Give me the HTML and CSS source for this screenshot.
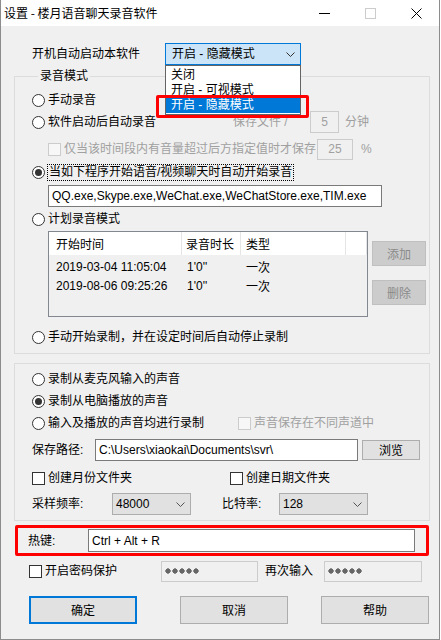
FILE: index.html
```html
<!DOCTYPE html>
<html lang="zh-CN">
<head>
    <meta charset="UTF-8">
    <title>设置 - 楼月语音聊天录音软件</title>
    <link rel="stylesheet" href="styles.css">
</head>
<body>
<div class="window">
    <div class="titlebar">
        <span class="title">设置 - 楼月语音聊天录音软件</span>
        <div class="ctrls">
            <span class="ctrl">
                <svg width="11" height="11" viewBox="0 0 11 11"><line x1="0" y1="5.5" x2="11" y2="5.5" stroke="#000"/></svg>
            </span>
            <span class="ctrl">
                <svg width="11" height="11" viewBox="0 0 11 11"><rect x="0.5" y="0.5" width="10" height="10" fill="none" stroke="#ccc"/></svg>
            </span>
            <span class="ctrl">
                <svg width="11" height="11" viewBox="0 0 11 11"><path d="M0.5 0.5 L10.5 10.5 M10.5 0.5 L0.5 10.5" stroke="#000" fill="none"/></svg>
            </span>
        </div>
    </div>

    <div class="content">
        <div class="row autostart">
            <span class="autostart-label">开机自动启动本软件</span>
            <div class="combo-wrap">
                <div class="combo focus">
                    <span>开启 - 隐藏模式</span>
                    <svg class="chev" width="9" height="5" viewBox="0 0 9 5"><polyline points="0.5,0.5 4.5,4.5 8.5,0.5" fill="none" stroke="#333"/></svg>
                </div>
                <div class="dropdown">
                    <div class="item">关闭</div>
                    <div class="item">开启 - 可视模式</div>
                    <div class="item selected">开启 - 隐藏模式</div>
                </div>
                <div class="mark mark-item"></div>
            </div>
        </div>

        <fieldset class="group group-mode">
            <legend>录音模式</legend>

            <div class="row r1">
                <label class="opt"><span class="radio"></span>手动录音</label>
            </div>
            <div class="row">
                <label class="opt w-auto-rec"><span class="radio"></span>软件启动后自动录音</label>
                <span class="dim w-save">保存文件 /</span>
                <span class="edit disabled small-5">5</span>
                <span class="dim unit">分钟</span>
            </div>
            <div class="row r3 indent">
                <label class="opt dim w-threshold"><span class="check disabled"></span>仅当该时间段内有音量超过后方指定值时才保存</label>
                <span class="edit disabled small-25">25</span>
                <span class="dim pct">%</span>
            </div>
            <div class="row r4">
                <label class="opt"><span class="radio on"></span><span class="focus-rect">当如下程序开始语音/视频聊天时自动开始录音</span></label>
            </div>
            <div class="edit apps">QQ.exe,Skype.exe,WeChat.exe,WeChatStore.exe,TIM.exe</div>
            <div class="row r5">
                <label class="opt"><span class="radio"></span>计划录音模式</label>
            </div>
            <div class="schedule">
                <div class="list">
                    <div class="lrow head">
                        <span class="c1">开始时间</span>
                        <span class="c2">录音时长</span>
                        <span class="c3">类型</span>
                        <span class="c4"></span>
                    </div>
                    <div class="lbody">
                        <div class="lrow">
                            <span class="c1">2019-03-04 11:05:04</span>
                            <span class="c2">1'0''</span>
                            <span class="c3">一次</span>
                        </div>
                        <div class="lrow">
                            <span class="c1">2019-08-06 09:25:26</span>
                            <span class="c2">1'0''</span>
                            <span class="c3">一次</span>
                        </div>
                    </div>
                </div>
                <div class="side">
                    <span class="btn off add">添加</span>
                    <span class="btn off del">删除</span>
                </div>
            </div>
            <div class="row r6">
                <label class="opt"><span class="radio"></span>手动开始录制，并在设定时间后自动停止录制</label>
            </div>
        </fieldset>

        <fieldset class="group group-source">
            <div class="row q1">
                <label class="opt"><span class="radio"></span>录制从麦克风输入的声音</label>
            </div>
            <div class="row">
                <label class="opt"><span class="radio on"></span>录制从电脑播放的声音</label>
            </div>
            <div class="row">
                <label class="opt w-both"><span class="radio"></span>输入及播放的声音均进行录制</label>
                <label class="opt dim"><span class="check disabled"></span>声音保存在不同声道中</label>
            </div>
            <div class="row q4">
                <span class="w-path">保存路径:</span>
                <span class="edit path">C:\Users\xiaokai\Documents\svr\</span>
                <span class="btn browse">浏览</span>
            </div>
            <div class="row q5">
                <label class="opt w-month"><span class="check"></span>创建月份文件夹</label>
                <label class="opt"><span class="check"></span>创建日期文件夹</label>
            </div>
            <div class="row q6">
                <span class="w-rate">采样频率:</span>
                <span class="combo gray rate">
                    <span>48000</span>
                    <svg class="chev" width="9" height="5" viewBox="0 0 9 5"><polyline points="0.5,0.5 4.5,4.5 8.5,0.5" fill="none" stroke="#555"/></svg>
                </span>
                <span class="w-bit">比特率:</span>
                <span class="combo gray bit">
                    <span>128</span>
                    <svg class="chev" width="9" height="5" viewBox="0 0 9 5"><polyline points="0.5,0.5 4.5,4.5 8.5,0.5" fill="none" stroke="#555"/></svg>
                </span>
            </div>
        </fieldset>

        <div class="hotkey">
            <span class="w-hotkey">热键:</span>
            <span class="edit hotkey-edit">Ctrl + Alt + R</span>
        </div>

        <div class="row password">
            <label class="opt w-pass"><span class="check"></span>开启密码保护</label>
            <span class="edit disabled pass"><span class="dots"></span></span>
            <span class="again">再次输入</span>
            <span class="edit disabled pass pass2"><span class="dots"></span></span>
        </div>

        <div class="buttons">
            <span class="btn big default">确定</span>
            <span class="btn big">取消</span>
            <span class="btn big help">帮助</span>
        </div>
    </div>
</div>
</body>
</html>
```

FILE: styles.css
```css
body {
    margin: 0;
    background: #fff;
    font: 12px/16px "Liberation Sans", "Noto Sans CJK SC", sans-serif;
    color: #000;
}
.window {
    width: 440px;
    height: 640px;
    box-sizing: border-box;
    border: 1px solid #8c8c8c;
    border-top: 0;
    background: #f0f0f0;
}
.titlebar {
    height: 26px;
    background: #fff;
    display: flex;
    align-items: center;
    padding-left: 3px;
}
.title {
    font-family: "Noto Sans CJK SC", sans-serif;
}
.ctrls {
    margin-left: auto;
    display: flex;
}
.ctrl {
    width: 46px;
    height: 26px;
    display: flex;
    align-items: center;
    justify-content: center;
}
.ctrl svg {
    display: block;
}

.content {
    padding-top: 17px;
}
.row {
    height: 22px;
    display: flex;
    align-items: center;
}
.opt {
    display: flex;
    align-items: center;
    gap: 3px;
    white-space: nowrap;
}
.dim {
    color: #a0a0a0;
}

/* radio and check */
.radio {
    flex-shrink: 0;
    width: 13px;
    height: 13px;
    box-sizing: border-box;
    border: 1px solid #333;
    border-radius: 50%;
    background: #fff;
    display: flex;
    align-items: center;
    justify-content: center;
}
.radio.on::after {
    content: "";
    width: 7px;
    height: 7px;
    border-radius: 50%;
    background: #333;
}
.check {
    flex-shrink: 0;
    width: 13px;
    height: 13px;
    box-sizing: border-box;
    border: 1px solid #333;
    background: #fff;
}
.check.disabled {
    border-color: #cccccc;
    background: #f7f7f7;
}

/* edit boxes */
.edit {
    flex-shrink: 0;
    height: 22px;
    box-sizing: border-box;
    border: 1px solid #7a7a7a;
    background: #fff;
    padding: 0 3px;
    display: flex;
    align-items: center;
    white-space: nowrap;
}
.edit.disabled {
    border-color: #cccccc;
    background: #f0f0f0;
    color: #a0a0a0;
    justify-content: center;
}

/* buttons */
.btn {
    flex-shrink: 0;
    box-sizing: border-box;
    display: flex;
    align-items: center;
    justify-content: center;
    background: #e1e1e1;
    border: 1px solid #adadad;
    font-family: "Noto Sans CJK SC", sans-serif;
}
.btn.off {
    background: #cccccc;
    border-color: #bfbfbf;
    color: #8a8a8a;
}

/* autostart combo */
.autostart-label {
    width: 133px;
    padding-left: 31px;
}
.combo-wrap {
    position: relative;
}
.combo {
    flex-shrink: 0;
    height: 22px;
    box-sizing: border-box;
    display: flex;
    align-items: center;
    justify-content: space-between;
    padding: 0 5px 0 3px;
}
.combo.focus {
    width: 136px;
    border: 1px solid #0078d7;
    background: #cce4f7;
    padding-left: 6px;
}
.combo.gray {
    border: 1px solid #adadad;
    background: #e1e1e1;
}
.chev {
    display: block;
}
.dropdown {
    position: absolute;
    top: 22px;
    left: 0;
    width: 136px;
    box-sizing: border-box;
    border: 1px solid #646464;
    background: #fff;
    padding: 2px 0 1px;
    z-index: 2;
}
.item {
    height: 15px;
    line-height: 15px;
    padding-left: 5px;
}
.item.selected {
    background: #0078d7;
    color: #fff;
}
.mark {
    position: absolute;
    box-sizing: border-box;
    border: 3px solid #ff0000;
    border-radius: 2px;
    z-index: 3;
}
.mark-item {
    left: -9px;
    top: 52px;
    width: 153px;
    height: 23px;
}

/* group boxes */
.group {
    width: 416px;
    box-sizing: border-box;
    margin: 0 0 0 13px;
    padding: 0 0 5px 17px;
    border: 1px solid #dcdcdc;
    min-inline-size: 0;
}
.group legend {
    padding: 0 2px;
    margin-left: 6px;
    line-height: 16px;
}
.group-mode {
    margin-top: 3px;
}
.group-source {
    margin-top: 9px;
}
.r1 { margin-top: 5px; }
.r3 { margin-top: 5px; }
.r4 { margin-top: 1px; }
.r5 { margin-top: 1px; }
.r6 { margin-top: 9px; }
.indent { padding-left: 16px; }

.w-auto-rec { width: 201px; }
.w-save { width: 77px; }
.small-5 { width: 29px; }
.unit { margin-left: 6px; }
.w-threshold { width: 269px; }
.small-25 { width: 36px; height: 21px; }
.pct { margin-left: 8px; }

.focus-rect {
    border: 1px dotted #000;
    padding: 0 1px;
    margin-left: -1px;
    line-height: 15px;
}
.apps {
    width: 334px;
    margin: 2px 0 0 16px;
}

/* schedule list */
.schedule {
    display: flex;
    margin: 1px 0 0 16px;
}
.list {
    width: 320px;
    height: 86px;
    box-sizing: border-box;
    border: 1px solid #828790;
    background: #f0f0f0;
}
.lrow {
    display: flex;
    height: 19px;
    align-items: center;
    white-space: nowrap;
}
.lrow.head {
    height: 23px;
    background: #fff;
    font-family: "Noto Sans CJK SC", sans-serif;
}
.lbody {
    padding-top: 2px;
}
.lbody .c3 {
    font-family: "Noto Sans CJK SC", sans-serif;
}
.c1 { width: 125px; padding-left: 7px; }
.c2 { width: 53px; padding-left: 6px; }
.c3 { width: 99px; padding-left: 6px; }
.c4 { flex: 1; }
.head span {
    height: 23px;
    display: flex;
    align-items: center;
    border-right: 1px solid #e5e5e5;
}
.head .c2 { padding-left: 4px; width: 54px; }
.head .c3 { padding-left: 5px; width: 99px; }
.side {
    display: flex;
    flex-direction: column;
    margin-left: 4px;
}
.side .btn {
    width: 54px;
    height: 25px;
}
.add { margin-top: 10px; }
.del { margin-top: 14px; }

/* source group */
.q1 { margin-top: 4px; }
.q4 { margin-top: 5px; }
.q5 { margin-top: 6px; }
.q6 { margin-top: 4px; }
.w-both { width: 206px; }
.w-path { width: 63px; }
.path { width: 263px; }
.browse {
    width: 58px;
    height: 20px;
    margin-left: 4px;
}
.w-month { width: 198px; }
.w-rate { width: 80px; }
.rate { width: 79px; }
.w-bit { width: 57px; margin-left: 31px; }
.bit { width: 89px; }

/* hotkey (highlighted) */
.hotkey {
    width: 414px;
    height: 31px;
    box-sizing: border-box;
    margin: 4px 0 0 14px;
    border: 3px solid #ff0000;
    border-radius: 2px;
    padding-left: 10px;
    display: flex;
    align-items: center;
}
.w-hotkey { width: 60px; }
.hotkey-edit {
    width: 327px;
    height: 23px;
}

/* password */
.password {
    margin-top: 4px;
    padding-left: 28px;
}
.w-pass { width: 132px; }
.edit.pass {
    width: 97px;
    height: 21px;
    justify-content: flex-start;
    padding-left: 3px;
}
.dots {
    width: 34px;
    height: 6px;
    background: radial-gradient(circle at 3px 3px, #666 2.4px, transparent 2.9px) 0 0 / 7px 6px repeat-x;
}
.again { margin-left: 7px; width: 59px; }
.edit.pass2 { width: 98px; }

/* bottom buttons */
.buttons {
    display: flex;
    margin-top: 14px;
    padding-left: 28px;
    gap: 43px;
}
.btn.big {
    width: 108px;
    height: 28px;
}
.btn.big + .btn.big + .btn.big {
    margin-left: -10px;
}
.btn.default {
    border: 2px solid #0078d7;
}
```
